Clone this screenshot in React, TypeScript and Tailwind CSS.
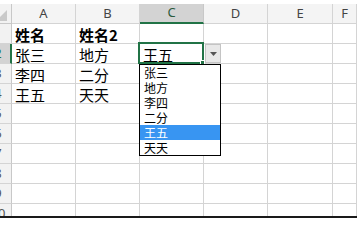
import React from 'react'

const cols = ['A', 'B', 'C', 'D', 'E', 'F']
const widths = ['w-[64px]', 'w-[64px]', 'w-[64px]', 'w-[64px]', 'w-[65px]', 'flex-1']

const data: Record<number, string[]> = {
  1: ['姓名', '姓名2', '', '', '', ''],
  2: ['张三', '地方', '王五', '', '', ''],
  3: ['李四', '二分', '', '', '', ''],
  4: ['王五', '天天', '', '', '', ''],
}

const options = ['张三', '地方', '李四', '二分', '王五', '天天']

export default function App() {
  const rows = Array.from({ length: 10 }, (_, i) => i + 1)

  return (
    <div className="relative h-[218px] w-[357px] overflow-hidden bg-white font-['Noto_Sans_CJK_SC','Noto_Sans',sans-serif] text-black">
      {/* column headers */}
      <div className="flex h-[24px] pt-[4px]">
        <div className="relative h-[20px] w-[12px] border-b border-r border-[#c8c8c8] bg-[#f2f2f2]">
          <svg className="absolute left-0 top-0" width="12" height="20" viewBox="0 0 12 20">
            <polygon points="7,6 7,17 -4,17" fill="#c9c9c9" />
          </svg>
        </div>
        {cols.map((c, i) => (
          <div
            key={c}
            className={`flex h-[20px] items-center justify-center border-r font-['Noto_Sans',sans-serif] text-[13px] ${widths[i]} ${
              c === 'C'
                ? 'border-b-2 border-r-[#c8c8c8] border-b-[#217346] bg-[#d3d3d3] text-[#2d5a3d]'
                : 'border-b border-[#d4d4d4] bg-[#f4f4f4] text-[#444]'
            }`}
          >
            {c}
          </div>
        ))}
      </div>

      {/* rows */}
      {rows.map((r) => (
        <div key={r} className={`flex ${r === 10 ? 'h-[12px] overflow-hidden' : 'h-[20px]'}`}>
          <div
            className={`h-[20px] w-[12px] shrink-0 overflow-hidden border-b border-b-[#d4d4d4] font-['Noto_Sans',sans-serif] text-[13px] leading-[19px] ${
              r === 2
                ? 'border-r-2 border-r-[#217346] bg-[#d3d3d3] text-[#217346]'
                : 'border-r border-r-[#c8c8c8] bg-[#f2f2f2] text-[#555]'
            }`}
          >
            <div className="-ml-[14px] w-[24px] text-center">{r}</div>
          </div>
          {cols.map((c, i) => (
            <div
              key={c}
              className={`h-[20px] shrink-0 border-b border-r border-[#d4d4d4] px-[3px] text-[15px] leading-[21px] whitespace-nowrap ${widths[i]} ${
                r === 1 ? 'font-bold' : ''
              }`}
            >
              {data[r]?.[i] ?? ''}
            </div>
          ))}
        </div>
      ))}

      <div className="h-[2px] bg-[#1a1a1a]" />

      {/* active cell C2 */}
      <div className="absolute left-[138px] top-[42px] h-[22px] w-[66px] border-2 border-[#217346]" />
      <div className="absolute left-[200px] top-[60px] h-[5px] w-[5px] border border-white bg-[#217346]" />

      {/* dropdown button */}
      <div className="absolute left-[205px] top-[44px] flex h-[19px] w-[16px] items-center justify-center border border-[#c4c4c4] bg-[#e8e8e8]">
        <svg width="7" height="4" viewBox="0 0 7 4">
          <polygon points="0,0 7,0 3.5,4" fill="#555" />
        </svg>
      </div>

      {/* dropdown list */}
      <div className="absolute left-[139px] top-[64px] w-[82px] border border-black bg-white">
        {options.map((o) => (
          <div
            key={o}
            className={`h-[15px] px-[4px] text-[12px] leading-[15px] ${
              o === '王五' ? 'bg-[#3895f2] text-white' : 'text-black'
            }`}
          >
            {o}
          </div>
        ))}
      </div>
    </div>
  )
}
